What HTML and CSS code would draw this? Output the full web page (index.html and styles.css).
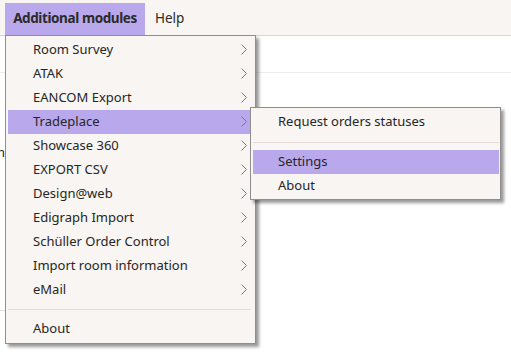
FILE: index.html
```html
<!DOCTYPE html>
<html lang="en">
<head>
    <meta charset="UTF-8">
    <title>Additional modules</title>
    <link rel="stylesheet" href="styles.css">
</head>
<body>
    <div class="menubar">
        <div class="menubar-item active">Additional modules</div>
        <div class="menubar-item">Help</div>
    </div>

    <div class="page">
        <div class="toolbar"></div>
        <div class="side">
            <div class="side-row first"><span>Situation</span></div>
            <div class="side-row last"></div>
        </div>
    </div>

    <div class="dropdown">
        <div class="item">Room Survey<svg class="chevron" viewBox="0 0 6 11"><polyline points="0.5,0.5 5.5,5.5 0.5,10.5"/></svg></div>
        <div class="item">ATAK<svg class="chevron" viewBox="0 0 6 11"><polyline points="0.5,0.5 5.5,5.5 0.5,10.5"/></svg></div>
        <div class="item">EANCOM Export<svg class="chevron" viewBox="0 0 6 11"><polyline points="0.5,0.5 5.5,5.5 0.5,10.5"/></svg></div>
        <div class="item selected">Tradeplace<svg class="chevron" viewBox="0 0 6 11"><polyline points="0.5,0.5 5.5,5.5 0.5,10.5"/></svg></div>
        <div class="item">Showcase 360<svg class="chevron" viewBox="0 0 6 11"><polyline points="0.5,0.5 5.5,5.5 0.5,10.5"/></svg></div>
        <div class="item">EXPORT CSV<svg class="chevron" viewBox="0 0 6 11"><polyline points="0.5,0.5 5.5,5.5 0.5,10.5"/></svg></div>
        <div class="item">Design@web<svg class="chevron" viewBox="0 0 6 11"><polyline points="0.5,0.5 5.5,5.5 0.5,10.5"/></svg></div>
        <div class="item">Edigraph Import<svg class="chevron" viewBox="0 0 6 11"><polyline points="0.5,0.5 5.5,5.5 0.5,10.5"/></svg></div>
        <div class="item">Schüller Order Control<svg class="chevron" viewBox="0 0 6 11"><polyline points="0.5,0.5 5.5,5.5 0.5,10.5"/></svg></div>
        <div class="item">Import room information<svg class="chevron" viewBox="0 0 6 11"><polyline points="0.5,0.5 5.5,5.5 0.5,10.5"/></svg></div>
        <div class="item">eMail<svg class="chevron" viewBox="0 0 6 11"><polyline points="0.5,0.5 5.5,5.5 0.5,10.5"/></svg></div>
        <div class="separator"></div>
        <div class="item">About</div>
    </div>

    <div class="dropdown submenu">
        <div class="item">Request orders statuses</div>
        <div class="separator"></div>
        <div class="item selected">Settings</div>
        <div class="item">About</div>
    </div>
</body>
</html>
```

FILE: styles.css
```css
* {
    margin: 0;
    padding: 0;
    box-sizing: border-box;
}

body {
    font-family: 'Noto Sans', 'Open Sans', sans-serif;
    font-size: 13px;
    color: #262626;
    background: #fff;
    width: 511px;
    height: 353px;
    overflow: hidden;
    position: relative;
}

.menubar {
    height: 36px;
    background-color: #f8f5f2;
    border-bottom: 1px solid #d9d5d1;
    display: flex;
    align-items: flex-end;
    padding-left: 5px;
}

.menubar-item {
    height: 32px;
    line-height: 30px;
    padding: 0 10px;
    font-size: 13.5px;
    color: #2a2a2a;
}

.menubar-item.active {
    width: 140px;
    padding: 0;
    text-align: center;
    background-color: #b9a9ec;
    font-weight: bold;
    letter-spacing: -0.4px;
}

.toolbar {
    height: 37px;
    border-bottom: 1px solid #ececec;
}

.side {
    width: 5px;
    overflow: hidden;
}

.side-row {
    display: flex;
    justify-content: flex-end;
    white-space: nowrap;
}

.side-row.first {
    height: 237px;
    padding-top: 70px;
    font-size: 13px;
}

.side-row.last {
    border-bottom: 1px solid #dedede;
}

/* menus */
.dropdown {
    position: absolute;
    left: 5px;
    top: 35px;
    width: 251px;
    background-color: #f8f5f2;
    border: 1px solid #8e8e8e;
    padding: 2px 4px 2px 2px;
    box-shadow: 3px 3px 3px rgba(0, 0, 0, 0.4);
}

.item {
    height: 24px;
    line-height: 23px;
    padding-left: 25px;
    position: relative;
    white-space: nowrap;
}

.item.selected {
    background-color: #b9a9ec;
}

.chevron {
    position: absolute;
    right: 4px;
    top: 6px;
    width: 6px;
    height: 11px;
    fill: none;
    stroke: #7a7a7a;
    stroke-width: 1;
}

.separator {
    height: 15px;
    padding-top: 7px;
}

.separator::after {
    content: "";
    display: block;
    height: 1px;
    background-color: #e9dcd8;
}

.submenu {
    left: 250px;
    top: 107px;
    width: 251px;
    padding: 2px 1px 1px 2px;
}

.submenu .separator {
    height: 16px;
    padding-top: 8px;
}
```
